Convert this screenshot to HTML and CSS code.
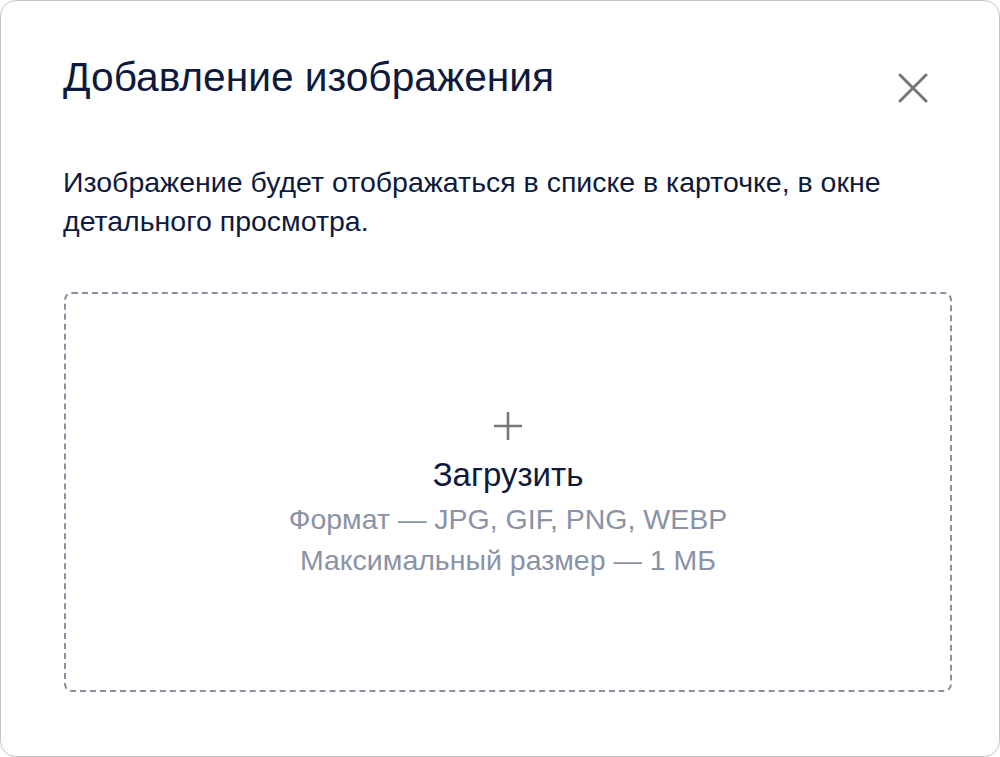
FILE: index.html
```html
<!DOCTYPE html>
<html lang="ru">
<head>
<meta charset="utf-8">
<title>Добавление изображения</title>
<link rel="stylesheet" href="styles.css">
</head>
<body>
<div class="modal">
  <div class="modal-header">
    <h1 class="modal-title">Добавление изображения</h1>
    <button class="close-btn" aria-label="Закрыть">
      <svg width="30" height="30" viewBox="0 0 30 30"><path d="M2 2 L28 28 M28 2 L2 28" stroke="#767676" stroke-width="3" stroke-linecap="round" fill="none"/></svg>
    </button>
  </div>
  <p class="modal-desc">Изображение будет отображаться в списке в карточке, в окне детального просмотра.</p>
  <div class="dropzone">
    <svg class="plus" width="28" height="28" viewBox="0 0 28 28"><path d="M14 0 V28 M0 14 H28" stroke="#787878" stroke-width="2.6" fill="none"/></svg>
    <div class="upload-label">Загрузить</div>
    <div class="hint">Формат — JPG, GIF, PNG, WEBP</div>
    <div class="hint">Максимальный размер — 1 МБ</div>
  </div>
</div>
</body>
</html>
```
FILE: styles.css
```css
html, body {
  margin: 0;
  padding: 0;
  background: #ffffff;
}
body {
  font-family: "Liberation Sans", Arial, sans-serif;
  color: #0e1a3d;
}
.modal {
  box-sizing: border-box;
  width: 1000px;
  height: 757px;
  border: 1px solid #c6c6c6;
  border-radius: 16px;
  padding: 52px 47px 0 62px;
  background: #fff;
}
.modal-header {
  display: flex;
  justify-content: space-between;
  align-items: flex-start;
}
.modal-title {
  margin: 0;
  font-size: 40.7px;
  line-height: 48px;
  font-weight: normal;
  color: #0e1a3d;
}
.close-btn {
  margin: 20px 24px 0 0;
  padding: 0;
  border: none;
  background: none;
  width: 30px;
  height: 30px;
  display: flex;
}
.modal-desc {
  margin: 60px 0 0 0;
  max-width: 860px;
  font-size: 28.5px;
  line-height: 39px;
  color: #0e1a3d;
}
.dropzone {
  box-sizing: border-box;
  margin-top: 51px;
  margin-left: 1px;
  height: 400px;
  border: 2px dashed #8a8fa2;
  border-radius: 8px;
  display: flex;
  flex-direction: column;
  align-items: center;
  justify-content: center;
  padding-top: 8px;
}
.plus {
  display: block;
}
.upload-label {
  margin-top: 16px;
  font-size: 33px;
  line-height: 38px;
  color: #0e1a3d;
  margin-bottom: 5px;
}
.hint {
  font-size: 28.5px;
  line-height: 41px;
  color: #8a92a6;
}
```
